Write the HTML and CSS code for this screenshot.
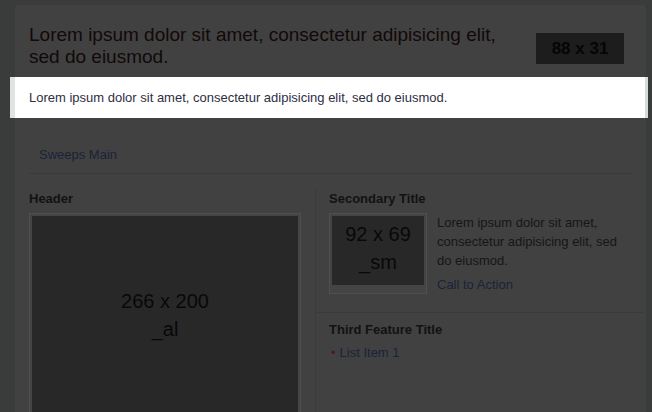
FILE: index.html
```html
<!DOCTYPE html>
<html lang="en">
<head>
<meta charset="utf-8">
<title>Sweeps</title>
<link rel="stylesheet" href="styles.css">
</head>
<body>
<div class="card">
  <div class="masthead">
    <h1 class="headline">Lorem ipsum dolor sit amet, consectetur adipisicing elit, sed do eiusmod.</h1>
    <div class="ad-box">88 x 31</div>
  </div>
  <div class="spotlight">
    <p class="spotlight-text">Lorem ipsum dolor sit amet, consectetur adipisicing elit, sed do eiusmod.</p>
  </div>
  <div class="nav">
    <a class="nav-link" href="#">Sweeps Main</a>
  </div>
  <div class="content">
    <div class="main-col">
      <h2 class="section-title">Header</h2>
      <div class="frame">
        <div class="placeholder placeholder-lg">266 x 200<br>_al</div>
      </div>
    </div>
    <div class="side-col">
      <div class="feature">
        <h2 class="section-title">Secondary Title</h2>
        <div class="media">
          <div class="frame">
            <div class="placeholder placeholder-sm">92 x 69<br>_sm</div>
          </div>
          <div class="media-body">
            <p class="media-text">Lorem ipsum dolor sit amet, consectetur adipisicing elit, sed do eiusmod.</p>
            <a class="cta" href="#">Call to Action</a>
          </div>
        </div>
      </div>
      <div class="feature feature-list">
        <h2 class="section-title">Third Feature Title</h2>
        <ul class="bullets">
          <li><a href="#">List Item 1</a></li>
        </ul>
      </div>
    </div>
  </div>
</div>
</body>
</html>
```

FILE: styles.css
```css
html, body {
  margin: 0;
  padding: 0;
}
body {
  background: #3a3b3b;
  font-family: "Liberation Sans", Arial, sans-serif;
  padding-top: 5px;
  height: 407px;
  overflow: hidden;
}
.card {
  margin-left: 15px;
  width: 631px;
  min-height: 420px;
  background: #414141;
  border-right: 1px solid #3a3a3a;
  border-radius: 4px 4px 0 0;
}
.masthead {
  display: flex;
  justify-content: space-between;
  align-items: flex-start;
  padding: 19px 22px 0 14px;
}
.headline {
  margin: 0;
  width: 490px;
  font-size: 19px;
  font-weight: normal;
  line-height: 22px;
  color: #120909;
}
.ad-box {
  margin-top: 9px;
  width: 88px;
  height: 31px;
  background: #1d1d1d;
  color: #050505;
  font-size: 17px;
  font-weight: bold;
  line-height: 31px;
  text-align: center;
}
.spotlight {
  margin: 9px 0 0 -5px;
  width: 630px;
  background: #ffffff;
  border-left: 5px solid #dfe3e3;
  border-right: 3px solid #d5dcdc;
  padding: 12px 0;
}
.spotlight-text {
  margin: 0;
  padding-left: 14px;
  font-size: 13px;
  line-height: 17px;
  color: #2e2e44;
}
.nav {
  margin: 0 14px;
  padding: 27px 0 10px;
  border-bottom: 1px solid #3a3a3a;
}
.nav-link {
  margin-left: 10px;
  font-size: 13px;
  line-height: 17px;
  color: #1a2339;
  text-decoration: none;
}
.content {
  display: flex;
  margin-top: 15px;
  padding-left: 14px;
}
.main-col {
  width: 272px;
  margin-right: 14px;
}
.side-col {
  width: 329px;
  border-left: 1px solid #3a3a3a;
  box-sizing: border-box;
  min-height: 240px;
}
.section-title {
  margin: 0;
  font-size: 13px;
  font-weight: bold;
  line-height: 16px;
  color: #121212;
}
.main-col .section-title {
  margin-top: 2px;
  margin-bottom: 6px;
}
.frame {
  display: inline-block;
  border: 1px solid #4d504d;
  padding: 2px;
  background: #444444;
  vertical-align: top;
}
.placeholder {
  background: #282828;
  color: #080808;
  font-size: 20px;
  line-height: 28px;
  text-align: center;
  box-sizing: border-box;
}
.placeholder-lg {
  width: 266px;
  height: 200px;
  padding-top: 71px;
}
.placeholder-sm {
  width: 92px;
  height: 69px;
  padding-top: 4px;
}
.feature {
  padding: 2px 13px 18px 13px;
  border-bottom: 1px solid #3a3a3a;
}
.feature .section-title {
  margin-bottom: 6px;
}
.media {
  display: flex;
  gap: 10px;
}
.media-body {
  flex: 1;
}
.media-text {
  margin: 0;
  font-size: 13px;
  line-height: 19px;
  color: #161616;
}
.cta {
  display: block;
  margin-top: 5px;
  font-size: 13px;
  line-height: 19px;
  color: #1a2339;
  text-decoration: none;
}
.feature-list {
  padding-top: 9px;
  border-bottom: none;
}
.feature-list .section-title {
  margin-bottom: 5px;
}
.bullets {
  margin: 0;
  padding: 0 0 0 2px;
  list-style: none;
}
.bullets li {
  font-size: 13px;
  line-height: 19px;
}
.bullets li::before {
  content: "\2022";
  color: #4a1c1c;
  margin-right: 4px;
}
.bullets a {
  color: #1a2339;
  text-decoration: none;
}
```
